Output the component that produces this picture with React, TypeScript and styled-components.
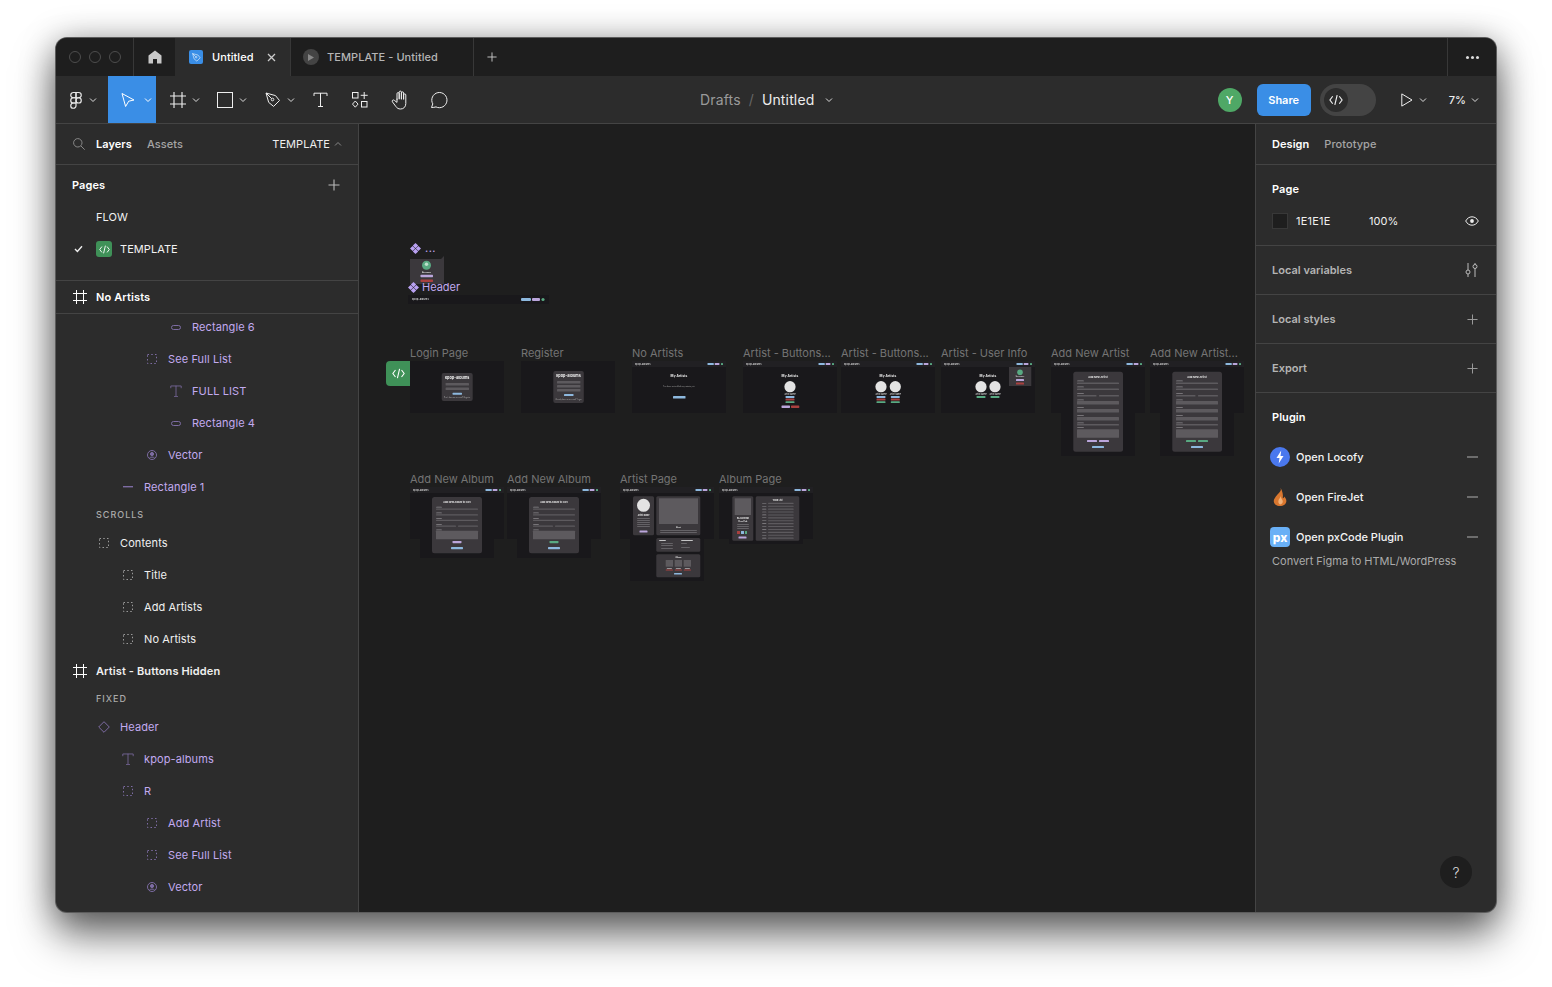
import React from 'react';
import styled, { createGlobalStyle } from 'styled-components';

const GlobalStyle = createGlobalStyle`
  html, body { margin: 0; padding: 0; background: #fff; }
  body { font-family: Inter, "Noto Sans", "Liberation Sans", sans-serif; -webkit-font-smoothing: antialiased; }
  * { box-sizing: border-box; }
`;

const PURPLE_TEXT = '#c2aaf0';
const PURPLE_ICON = '#7d6ca3';

/* ---------- icons ---------- */

type IconProps = { color?: string; size?: number };

const Chevron = ({ color = '#ddd' }: IconProps) => (
  <svg width="8" height="8" viewBox="0 0 8 8" fill="none"><path d="M1 2.5 4 5.5 7 2.5" stroke={color} strokeWidth="1" /></svg>
);
const Plus = ({ color = '#ddd', size = 11 }: IconProps) => (
  <svg width={size} height={size} viewBox="0 0 12 12" fill="none"><path d="M6 .5v11M.5 6h11" stroke={color} strokeWidth="1.1" /></svg>
);
const Minus = ({ color = '#999' }: IconProps) => (
  <svg width="11" height="12" viewBox="0 0 11 12" fill="none"><path d="M0 6h11" stroke={color} strokeWidth="1.2" /></svg>
);
const Hash = ({ color = '#fff', size = 14 }: IconProps) => (
  <svg width={size} height={size} viewBox="0 0 14 14" fill="none"><path d="M3.5 0v14M10.5 0v14M0 3.5h14M0 10.5h14" stroke={color} strokeWidth="1" /></svg>
);
const CodeGlyph = ({ color = '#fff', size = 12 }: IconProps) => (
  <svg width={size} height={size} viewBox="0 0 12 12" fill="none"><path d="M3.2 2.8 .8 6l2.4 3.2M8.8 2.8 11.2 6 8.8 9.2M7 1.8 5 10.2" stroke={color} strokeWidth="1" /></svg>
);
const FigmaLogo = () => (
  <svg width="16" height="18" viewBox="2 0 20 24" fill="none" stroke="#e8e8e8" strokeWidth="1.6">
    <path d="M5 5.5A3.5 3.5 0 0 1 8.5 2H12v7H8.5A3.5 3.5 0 0 1 5 5.5z" />
    <path d="M12 2h3.5a3.5 3.5 0 1 1 0 7H12V2z" />
    <path d="M12 12.5a3.5 3.5 0 1 1 7 0 3.5 3.5 0 1 1-7 0z" />
    <path d="M5 19.5A3.5 3.5 0 0 1 8.5 16H12v3.5a3.5 3.5 0 1 1-7 0z" />
    <path d="M5 12.5A3.5 3.5 0 0 1 8.5 9H12v7H8.5A3.5 3.5 0 0 1 5 12.5z" />
  </svg>
);
const CursorIcon = () => (
  <svg width="16" height="16" viewBox="0 0 16 16" fill="none"><path d="M2 1.5 14 8l-5.3 1.2L5.6 14.5 2 1.5Z" stroke="#fff" strokeWidth="1" strokeLinejoin="round" /></svg>
);
const RectIcon = () => (
  <svg width="16" height="16" viewBox="0 0 16 16" fill="none"><rect x=".5" y=".5" width="15" height="15" stroke="#eee" /></svg>
);
const PenIcon = ({ color = '#eee', size = 16 }: IconProps) => (
  <svg width={size} height={size} viewBox="0 0 16 16" fill="none" stroke={color}>
    <path d="M1 1l9.5 2.6 4 4.9-5.9 5.9-4.9-4Z" strokeLinejoin="round" />
    <path d="M1 1l5.6 5.6" />
    <circle cx="7.5" cy="7.5" r="1.3" />
  </svg>
);
const TextIcon = ({ color = '#eee', size = 15 }: IconProps) => (
  <svg width={size} height={size} viewBox="0 0 15 15" fill="none"><path d="M7.5 1v13M5 14.5h5M1 4V1.2h13V4" stroke={color} strokeWidth="1" /></svg>
);
const ResourcesIcon = () => (
  <svg width="16" height="16" viewBox="0 0 16 16" fill="none" stroke="#eee">
    <rect x=".5" y=".5" width="5.5" height="5.5" />
    <path d="M12.2 0v7M8.7 3.3h7" />
    <path d="M3.3 9 6 12.1 3.3 15.2.5 12.1Z" />
    <rect x="9.5" y="9.5" width="5.5" height="5.5" />
  </svg>
);
const HandIcon = () => (
  <svg width="19" height="20" viewBox="0 0 19 20" fill="none" stroke="#eee" strokeWidth="1" strokeLinejoin="round" strokeLinecap="round">
    <path d="M6 9.5V3.7a1.1 1.1 0 0 1 2.2 0V9M8.2 8.5V2.2a1.1 1.1 0 0 1 2.2 0V9M10.4 8.8V3a1.1 1.1 0 0 1 2.2 0v6M12.6 9V5a1.1 1.1 0 0 1 2.2 0v8.5c0 3.4-2.2 5.5-5.2 5.5-2.3 0-3.6-.9-4.8-2.6L1.4 11.8c-.8-1.2.8-2.5 1.9-1.5L6 12.4V9" />
  </svg>
);
const CommentIcon = () => (
  <svg width="18" height="18" viewBox="0 0 18 18" fill="none"><path d="M1.5 16.5l1.3-3.6A7.6 7.6 0 1 1 6 15.9c-1.4.5-2.9.6-4.5.6Z" stroke="#eee" strokeLinejoin="round" /></svg>
);
const PlayOutline = () => (
  <svg width="12" height="14" viewBox="0 0 12 14" fill="none"><path d="M.8.9 11 7 .8 13.1V.9Z" stroke="#eee" /></svg>
);
const HomeIcon = () => (
  <svg width="14" height="14" viewBox="0 0 14 14"><path d="M7 .5 13.5 5.6V13.5H9V9H5v4.5H.5V5.6Z" fill="#c8c8c8" /></svg>
);
const CloseIcon = () => (
  <svg width="9" height="9" viewBox="0 0 9 9" fill="none"><path d="M1 1l7 7M8 1 1 8" stroke="#ccc" strokeWidth="1.3" /></svg>
);
const SearchIcon = () => (
  <svg width="12" height="12" viewBox="0 0 12 12" fill="none" stroke="#888"><circle cx="4.8" cy="4.8" r="4.2" /><path d="M8 8l3.7 3.7" /></svg>
);
const CheckIcon = () => (
  <svg width="9" height="8" viewBox="0 0 9 8" fill="none"><path d="M1 4l2.4 2.4L8 1.2" stroke="#eee" strokeWidth="1.4" /></svg>
);
const EyeIcon = () => (
  <svg width="14" height="10" viewBox="0 0 14 10" fill="none"><path d="M.7 5C2.2 2.2 4.4.8 7 .8s4.8 1.4 6.3 4.2C11.8 7.8 9.6 9.2 7 9.2S2.2 7.8.7 5Z" stroke="#eee" /><circle cx="7" cy="5" r="1.9" fill="#eee" /></svg>
);
const SlidersIcon = () => (
  <svg width="13" height="14" viewBox="0 0 13 14" fill="none" stroke="#bbb"><path d="M3 0v7M3 11v3M10 0v1.500M10 5.500V14" /><circle cx="3" cy="9" r="2" /><circle cx="10" cy="3.500" r="2" /></svg>
);
const DottedFrame = ({ color = '#999' }: IconProps) => (
  <svg width="10" height="10" viewBox="0 0 10 10" fill="none"><rect x=".5" y=".5" width="9" height="9" stroke={color} strokeDasharray="1.5 2.25" /></svg>
);
const PillIcon = ({ color = PURPLE_ICON }: IconProps) => (
  <svg width="10" height="5" viewBox="0 0 10 5" fill="none"><rect x=".5" y=".5" width="9" height="4" rx="2" stroke={color} /></svg>
);
const DashIcon = ({ color = PURPLE_ICON }: IconProps) => (
  <svg width="10" height="2" viewBox="0 0 10 2"><rect width="10" height="1.4" fill={color} /></svg>
);
const VectorIcon = ({ color = PURPLE_ICON }: IconProps) => (
  <svg width="10" height="10" viewBox="0 0 10 10" fill="none" stroke={color}><circle cx="5" cy="5" r="4.5" /><circle cx="5" cy="4" r="1.6" fill={color} /><path d="M2.300 8.200C3 6.700 7 6.700 7.700 8.200" /></svg>
);
const DiamondIcon = ({ color = PURPLE_ICON }: IconProps) => (
  <svg width="12" height="12" viewBox="0 0 12 12" fill="none"><path d="M6 .7 11.300 6 6 11.300.7 6Z" stroke={color} /></svg>
);
const ComponentIcon = () => (
  <svg width="11" height="11" viewBox="0 0 11 11" fill="#b9a1f2"><path d="M5.500 0 8.200 2.600 5.500 5.200 2.800 2.600ZM5.500 5.800 8.200 8.400 5.500 11 2.800 8.400ZM2.600 2.900 5.200 5.500 2.600 8.100 0 5.500ZM8.400 2.900 11 5.500 8.400 8.100 5.800 5.500Z" /></svg>
);
const BoltBadge = () => (
  <svg width="20" height="20" viewBox="0 0 20 20"><circle cx="10" cy="10" r="10" fill="#4a78ee" /><path d="M11.200 3.500 6.500 11h3l-.8 5.500 4.800-7.600h-3Z" fill="#fff" /></svg>
);
const FlameBadge = () => (
  <svg width="20" height="20" viewBox="0 0 20 20">
    <g transform="translate(-2 0) scale(1.2 1)">
      <path d="M10.500 1c.8 2.500-.5 3.800-1.800 5.500C7.300 8.300 6.500 9.500 6.800 9c-.5 1.500-2 2.600-2 5 0 3 2.400 5 5.200 5s5.300-2 5.300-5c0-2-1-3.300-1.600-4.500-.3 1-.8 1.500-1.400 1.800.5-3.500-.3-7.500-1.800-10.300Z" fill="#d9772f" />
      <path d="M10.400 9c.3 1.700-1.800 3-1.800 5.400 0 1.700.9 2.800 1.700 3 1.300-.5 2.200-1.600 2-3.200-.1-1.400-1.500-2.900-1.900-5.200Z" fill="#f0b27a" />
    </g>
  </svg>
);

/* ---------- layout ---------- */

const Page = styled.div`
  width: 1552px;
  height: 987px;
  padding: 38px 56px 75px;
  overflow: hidden;
`;
const Window = styled.div`
  width: 1440px;
  height: 874px;
  display: flex;
  flex-direction: column;
  background: #2c2c2c;
  border-radius: 11px;
  overflow: hidden;
  color: #fff;
  font-size: 11px;
  font-weight: 500;
  letter-spacing: 0.06px;
  box-shadow: 0 0 0 1px #5c5c5c, 0 24px 42px rgba(0, 0, 0, 0.5), 0 4px 34px rgba(0, 0, 0, 0.4);
`;
const TabBar = styled.div`
  height: 38px;
  flex: none;
  display: flex;
  align-items: stretch;
  background: #1e1e1e;
`;
const Lights = styled.div`
  width: 78px;
  display: flex;
  align-items: center;
  gap: 8px;
  padding-left: 13px;
  border-right: 1px solid #383838;
`;
const Light = styled.span`
  width: 12px;
  height: 12px;
  border-radius: 50%;
  border: 1px solid #4d4d4d;
`;
const HomeTab = styled.div`
  width: 41px;
  display: flex;
  align-items: center;
  justify-content: center;
`;
const Tab = styled.div<{ $active?: boolean }>`
  width: ${p => (p.$active ? '116px' : '183px')};
  display: flex;
  align-items: center;
  padding-left: ${p => (p.$active ? '14px' : '12px')};
  background: ${p => (p.$active ? '#2c2c2c' : 'transparent')};
  color: ${p => (p.$active ? '#fff' : '#b5b5b5')};
  border-right: 1px solid #383838;
  font-size: 11px;
`;
const TabBlueIcon = styled.span`
  width: 14px;
  height: 14px;
  border-radius: 2px;
  background: #3a8ee6;
  display: flex;
  align-items: center;
  justify-content: center;
  margin-right: 9px;
`;
const TabPlayIcon = styled.span`
  width: 16px;
  height: 16px;
  border-radius: 50%;
  background: #444;
  display: flex;
  align-items: center;
  justify-content: center;
  margin-right: 8px;
`;
const TabClose = styled.span`
  margin-left: 13px;
  display: flex;
`;
const NewTab = styled.div`
  width: 36px;
  display: flex;
  align-items: center;
  justify-content: center;
`;
const TabSpacer = styled.div`
  flex: 1;
`;
const MoreTab = styled.div`
  width: 49px;
  border-left: 1px solid #383838;
  display: flex;
  align-items: center;
  justify-content: center;
  gap: 2px;
`;
const MoreDot = styled.span`
  width: 3px;
  height: 3px;
  border-radius: 50%;
  background: #ddd;
`;

const Toolbar = styled.div`
  height: 48px;
  flex: none;
  display: flex;
  align-items: stretch;
  background: #2c2c2c;
  border-bottom: 1px solid #444;
`;
const Tools = styled.div`
  width: 644px;
  display: flex;
  align-items: stretch;
`;
const Tool = styled.div<{ $w: number; $active?: boolean; $pad?: number; $center?: boolean; $gap?: number }>`
  width: ${p => p.$w}px;
  display: flex;
  align-items: center;
  gap: ${p => p.$gap ?? 6}px;
  justify-content: ${p => (p.$center ? 'center' : 'flex-start')};
  padding-left: ${p => (p.$center ? 0 : p.$pad ?? 14)}px;
  background: ${p => (p.$active ? '#3a8ee6' : 'transparent')};
`;
const Breadcrumb = styled.div`
  display: flex;
  align-items: center;
  font-size: 14px;
  font-weight: 400;
  letter-spacing: 0.15px;
`;
const Crumb = styled.span<{ $dim?: boolean }>`
  color: ${p => (p.$dim ? '#9a9a9a' : '#ececec')};
`;
const Slash = styled.span`
  color: #666;
  margin: 0 8px;
`;
const CrumbChevron = styled.span`
  display: flex;
  margin-left: 11px;
`;
const ToolbarRight = styled.div`
  margin-left: auto;
  display: flex;
  align-items: center;
  padding-right: 17px;
`;
const Avatar = styled.div`
  width: 24px;
  height: 24px;
  border-radius: 50%;
  background: #4fa866;
  display: flex;
  align-items: center;
  justify-content: center;
  font-size: 11px;
  margin-right: 15px;
`;
const ShareButton = styled.button`
  width: 54px;
  height: 32px;
  border: 0;
  border-radius: 6px;
  background: #3a8ee6;
  color: #fff;
  font: 600 11px Inter, sans-serif;
  margin-right: 9px;
`;
const CodeToggle = styled.div`
  width: 56px;
  height: 32px;
  border-radius: 16px;
  background: #444;
  padding: 4px;
  margin-right: 25px;
`;
const CodeKnob = styled.div`
  width: 24px;
  height: 24px;
  border-radius: 50%;
  background: #2c2c2c;
  display: flex;
  align-items: center;
  justify-content: center;
`;
const PlayGroup = styled.div`
  display: flex;
  align-items: center;
  gap: 6px;
  margin-right: 22px;
`;
const ZoomGroup = styled.div`
  display: flex;
  align-items: center;
  gap: 5px;
  font-size: 11px;
  color: #eee;
`;

const Body = styled.div`
  flex: 1;
  min-height: 0;
  display: flex;
`;
const LeftPanel = styled.aside`
  width: 303px;
  flex: none;
  border-right: 1px solid #444;
  display: flex;
  flex-direction: column;
  overflow: hidden;
`;
const PanelTabs = styled.div`
  height: 41px;
  flex: none;
  display: flex;
  align-items: center;
  border-bottom: 1px solid #444;
  padding: 0 16px;
`;
const SearchSlot = styled.span`
  display: flex;
  margin-right: 11px;
  margin-left: 1px;
`;
const PanelTab = styled.span<{ $active?: boolean }>`
  color: ${p => (p.$active ? '#fff' : '#a5a5a5')};
  font-weight: ${p => (p.$active ? 600 : 500)};
  margin-right: 15px;
`;
const PageSwitch = styled.span`
  margin-left: auto;
  display: flex;
  align-items: center;
  gap: 4px;
  color: #eee;
  font-weight: 400;
`;
const PagesSection = styled.section`
  height: 116px;
  flex: none;
  border-bottom: 1px solid #444;
`;
const PagesHead = styled.div`
  height: 36px;
  padding: 4px 18px 0 16px;
  display: flex;
  align-items: center;
  justify-content: space-between;
  font-weight: 600;
`;
const PageRow = styled.div`
  height: 32px;
  display: flex;
  align-items: center;
  padding-left: 40px;
  color: #f2f2f2;
  font-weight: 400;
  position: relative;
`;
const PageCheck = styled.span`
  position: absolute;
  left: 18px;
  display: flex;
`;
const GreenBadge = styled.span`
  width: 16px;
  height: 16px;
  border-radius: 3px;
  background: #3f9158;
  display: flex;
  align-items: center;
  justify-content: center;
  margin-right: 8px;
`;
const StickyRow = styled.div`
  height: 33px;
  flex: none;
  display: flex;
  align-items: center;
  gap: 9px;
  padding-left: 17px;
  font-weight: 600;
  letter-spacing: 0.12px;
  border-bottom: 1px solid #444;
`;
const LayerList = styled.div`
  margin-top: -3px;
`;
const LayerRow = styled.div<{ $depth: number; $purple?: boolean; $bold?: boolean }>`
  height: 32px;
  display: flex;
  align-items: center;
  padding-left: ${p => 16 + p.$depth * 24}px;
  color: ${p => (p.$purple ? PURPLE_TEXT : '#f0f0f0')};
  font-weight: ${p => (p.$bold ? 600 : 400)};
  letter-spacing: ${p => (p.$bold ? 0.12 : 0.1)}px;
`;
const LayerIcon = styled.span`
  width: 16px;
  height: 16px;
  display: flex;
  align-items: center;
  justify-content: center;
  margin-right: 8px;
`;
const SectionLabel = styled.div`
  height: 24px;
  display: flex;
  align-items: center;
  padding: 0 0 2px 40px;
  font-size: 9px;
  font-weight: 500;
  letter-spacing: 1px;
  color: #aaa;
`;

const Canvas = styled.main`
  flex: 1;
  position: relative;
  background: #1e1e1e;
  overflow: hidden;
`;
const Thumb = styled.div<{ $x: number; $y: number; $w: number }>`
  position: absolute;
  left: ${p => p.$x - 359}px;
  top: ${p => p.$y - 124 - 16}px;
  width: ${p => p.$w}px;
  display: flex;
  flex-direction: column;
`;
const ThumbLabel = styled.div`
  height: 16px;
  line-height: 16px;
  font-size: 11px;
  font-weight: 400;
  letter-spacing: 0;
  color: #747474;
  white-space: nowrap;
`;
const ThumbArt = styled.svg`
  display: block;
  overflow: visible;
  filter: blur(0.35px);
`;
const CodeTag = styled.div`
  position: absolute;
  left: 27px;
  top: 237px;
  width: 24px;
  height: 25px;
  border-radius: 4px 0 0 4px;
  background: #3f9158;
  display: flex;
  align-items: center;
  justify-content: center;
`;
const ComponentLabel = styled.div<{ $x: number; $y: number; $big?: boolean }>`
  position: absolute;
  left: ${p => p.$x - 359}px;
  top: ${p => p.$y - 124}px;
  display: flex;
  align-items: center;
  gap: ${p => (p.$big ? 3 : 4)}px;
  color: ${PURPLE_TEXT};
  font-weight: 400;
  font-size: 11px;
  line-height: 12px;
  letter-spacing: ${p => (p.$big ? 0 : 0.5)}px;
`;
const FreeArt = styled.svg<{ $x: number; $y: number }>`
  position: absolute;
  left: ${p => p.$x - 359}px;
  top: ${p => p.$y - 124}px;
  filter: blur(0.35px);
`;

const RightPanel = styled.aside`
  width: 241px;
  flex: none;
  border-left: 1px solid #444;
  position: relative;
  display: flex;
  flex-direction: column;
`;
const RightSection = styled.section<{ $h: number }>`
  height: ${p => p.$h}px;
  flex: none;
  border-bottom: 1px solid #444;
  padding: 0 16px;
  display: flex;
  flex-direction: column;
`;
const CollapsedHead = styled.div`
  flex: 1;
  display: flex;
  align-items: center;
  justify-content: space-between;
  font-weight: 600;
  letter-spacing: 0;
  color: #b4b4b4;
  padding-right: 2px;
`;
const SectionTitle = styled.div`
  height: 48px;
  display: flex;
  align-items: center;
  font-weight: 600;
  flex: none;
`;
const PluginTitle = styled(SectionTitle)`
  height: 44px;
  padding-top: 4px;
`;
const FillRow = styled.div`
  height: 16px;
  display: flex;
  align-items: center;
  color: #f0f0f0;
  font-weight: 400;
`;
const Swatch = styled.span`
  width: 16px;
  height: 16px;
  background: #1e1e1e;
  border: 1px solid #383838;
  margin-right: 8px;
`;
const FillHex = styled.span`
  width: 73px;
  letter-spacing: 0.2px;
`;
const FillEye = styled.span`
  margin-left: auto;
  margin-right: 1px;
  display: flex;
`;
const PluginList = styled.section`
  padding: 0 16px;
  display: flex;
  flex-direction: column;
`;
const PluginRow = styled.div`
  height: 40px;
  display: flex;
  align-items: center;
  color: #f4f4f4;
  letter-spacing: 0;
`;
const PluginIcon = styled.span`
  width: 20px;
  height: 20px;
  margin-left: -2px;
  margin-right: 6px;
  display: flex;
`;
const PxBadge = styled.span`
  width: 20px;
  height: 20px;
  border-radius: 4px;
  background: #69b0f6;
  color: #fff;
  font: 800 12px Inter, sans-serif;
  display: flex;
  align-items: center;
  justify-content: center;
`;
const PluginMinus = styled.span`
  margin-left: auto;
  margin-right: 2px;
  display: flex;
`;
const PluginNote = styled.div`
  color: #ababab;
  font-weight: 400;
  letter-spacing: 0;
  line-height: 14px;
  margin-top: -3px;
`;
const HelpButton = styled.div`
  position: absolute;
  right: 24px;
  bottom: 24px;
  width: 32px;
  height: 32px;
  border-radius: 50%;
  background: #1e1e1e;
  color: #ddd;
  font-size: 14px;
  font-weight: 300;
  display: flex;
  align-items: center;
  justify-content: center;
`;

/* ---------- miniature frames on the canvas ---------- */

const C = {
  frame: '#19181b',
  bar: '#212023',
  card: '#3b383c',
  field: '#5d5a5e',
  blue: '#8db8de',
  purple: '#bba6dc',
  red: '#a9403f',
  green: '#59a982',
  disc: '#e3e3e3',
  text: '#f2f2f2',
};

const Tiny = ({ x, y, s = 2.4, w = 400, c = C.text, a = 'start', children }: { x: number; y: number; s?: number; w?: number; c?: string; a?: 'start' | 'middle' | 'end'; children: string }) => (
  <text x={x} y={y} fontSize={s} fontWeight={w} fill={c} textAnchor={a} fontFamily="Inter, sans-serif">{children}</text>
);
const Bar = ({ x, y, w, h = 2, c, r = 0.6 }: { x: number; y: number; w: number; h?: number; c: string; r?: number }) => (
  <rect x={x} y={y} width={w} height={h} rx={r} fill={c} />
);
const MiniHeader = ({ w = 94 }: { w?: number }) => (
  <>
    <rect width={w} height="6" fill={C.bar} />
    <Tiny x={3} y={3.9}>kpop-albums</Tiny>
    <Bar x={w - 18.5} y={2} w={6.300} c={C.blue} />
    <Bar x={w - 11.300} y={2} w={4.700} c={C.purple} />
    <Bar x={w - 5} y={2} w={2} c={C.green} />
  </>
);
const Backdrop = ({ h = 52, lower }: { h?: number; lower?: number }) => (
  <>
    <rect width="94" height={h} fill={C.frame} />
    {lower ? <rect x="10" y={h} width="74" height={lower} fill={C.frame} /> : null}
  </>
);
const ArtistColumn = ({ cx, bars }: { cx: number; bars: string[] }) => (
  <>
    <circle cx={cx} cy="25.700" r="5.600" fill={C.disc} />
    <Tiny x={cx} y={34} a="middle" s={1.900}>Artist Name</Tiny>
    {bars.map((c, i) => <Bar key={i} x={cx - 4.500} y={35 + i * 2.600} w={9} h={1.900} c={c} />)}
  </>
);

const LoginArt = () => (
  <ThumbArt width="94" height="52">
    <Backdrop />
    <rect x="31.700" y="12" width="31" height="28" rx="2" fill={C.card} />
    <Tiny x={47.200} y={18} a="middle" s={3.700} w={700}>kpop-albums</Tiny>
    <Bar x={35.600} y={22} w={23.400} h={2.500} c={C.field} />
    <Bar x={35.600} y={26.500} w={23.400} h={2.500} c={C.field} />
    <Bar x={42.500} y={31.700} w={9.500} h={2} c={C.blue} />
    <Tiny x={47.200} y={37} a="middle" s={1.600} c="#bbb">Don't have an account? Register</Tiny>
  </ThumbArt>
);
const RegisterArt = () => (
  <ThumbArt width="95" height="52">
    <Backdrop />
    <rect x="32.300" y="10" width="30.500" height="32" rx="2" fill={C.card} />
    <Tiny x={47.500} y={16} a="middle" s={3.700} w={700}>kpop-albums</Tiny>
    <Bar x={36} y={20} w={23.400} h={2.500} c={C.field} />
    <Bar x={36} y={24} w={23.400} h={2.500} c={C.field} />
    <Bar x={36} y={28} w={23.400} h={2.500} c={C.field} />
    <Bar x={43} y={33} w={9.500} h={2} c={C.blue} />
    <Tiny x={47.500} y={39} a="middle" s={1.600} c="#bbb">Already have an account? Login</Tiny>
  </ThumbArt>
);
const NoArtistsArt = () => (
  <ThumbArt width="95" height="52">
    <Backdrop />
    <MiniHeader />
    <Tiny x={47} y={15.500} a="middle" s={3.200} w={700}>My Artists</Tiny>
    <Tiny x={47} y={25.500} a="middle" s={1.800} c="#aaa">You have not added any artists yet.</Tiny>
    <Bar x={41} y={35} w={12.500} h={2.600} c={C.blue} />
  </ThumbArt>
);
const ButtonsOneArt = () => (
  <ThumbArt width="94" height="52">
    <Backdrop />
    <MiniHeader />
    <Tiny x={47} y={15.500} a="middle" s={3.200} w={700}>My Artists</Tiny>
    <ArtistColumn cx={47} bars={[C.blue, C.red, C.green]} />
    <Bar x={38.500} y={44.500} w={8.500} h={2.400} c={C.purple} />
    <Bar x={48} y={44.500} w={8.300} h={2.400} c={C.red} />
  </ThumbArt>
);
const ButtonsTwoArt = () => (
  <ThumbArt width="94" height="52">
    <Backdrop />
    <MiniHeader />
    <Tiny x={47} y={15.500} a="middle" s={3.200} w={700}>My Artists</Tiny>
    <ArtistColumn cx={40} bars={[C.blue, C.red, C.green]} />
    <ArtistColumn cx={54.300} bars={[C.blue, C.red, C.green]} />
  </ThumbArt>
);
const UserInfoArt = () => (
  <ThumbArt width="94" height="52">
    <Backdrop />
    <MiniHeader />
    <Tiny x={47} y={15.500} a="middle" s={3.200} w={700}>My Artists</Tiny>
    <ArtistColumn cx={40} bars={[C.green]} />
    <ArtistColumn cx={54} bars={[C.green]} />
    <rect x="68" y="6" width="22.300" height="19" fill={C.card} />
    <circle cx="79" cy="11.300" r="2.800" fill={C.green} />
    <Tiny x={79} y={15.800} a="middle" s={1.700}>Username</Tiny>
    <Bar x={75} y={18} w={8} c={C.purple} />
    <Bar x={75} y={21.500} w={8} c={C.red} />
  </ThumbArt>
);
const NewArtistArt = ({ accent }: { accent: string }) => (
  <ThumbArt width="94" height="95">
    <Backdrop lower={43} />
    <MiniHeader />
    <rect x="22.300" y="10.700" width="49.700" height="80" rx="2.500" fill={C.card} />
    <Tiny x={47} y={16.500} a="middle" s={2.500} w={700}>Add New Artist</Tiny>
    {[19.500, 25.500, 32, 38.500, 46, 54, 61.500, 66.300].map((y, i) => <Bar key={i} x={26} y={y} w={7} h={0.800} c="#8a878b" />)}
    <Bar x={26} y={21.500} w={42} h={1.500} c={C.field} />
    <Bar x={26} y={27.500} w={42} h={1.500} c={C.field} />
    <Bar x={26} y={34} w={19.500} h={1.500} c={C.field} />
    <Bar x={48} y={34} w={20} h={1.500} c={C.field} />
    <Bar x={26} y={40} w={42} h={3.500} c={C.field} />
    <Bar x={26} y={48} w={42} h={3.500} c={C.field} />
    <Bar x={26} y={56} w={42} h={3.500} c={C.field} />
    <Bar x={26} y={63} w={42} h={1.500} c={C.field} />
    <Bar x={26} y={68.300} w={42} h={8.500} c={C.field} />
    <Bar x={36} y={79} w={10} h={2} c={accent} />
    <Bar x={48} y={79} w={10} h={2} c={accent} />
    <Bar x={41} y={85} w={12} h={2} c={C.blue} />
  </ThumbArt>
);
const NewAlbumArt = ({ accent }: { accent: string }) => (
  <ThumbArt width="94" height="71">
    <Backdrop lower={19} />
    <MiniHeader />
    <rect x="22" y="10" width="50" height="56.300" rx="2.500" fill={C.card} />
    <Tiny x={47} y={16} a="middle" s={2.300} w={700}>Add New Album to ICE1</Tiny>
    {[19.800, 25.500, 31, 37.300, 42.500].map((y, i) => <Bar key={i} x={26} y={y} w={6} h={0.800} c="#8a878b" />)}
    <Bar x={26} y={21.500} w={42} h={1.300} c={C.field} />
    <Bar x={26} y={27.200} w={42} h={1.300} c={C.field} />
    <Bar x={26} y={32.800} w={42} h={1.300} c={C.field} />
    <Bar x={26} y={38.500} w={20} h={1.300} c={C.field} />
    <Bar x={48} y={38.500} w={20} h={1.300} c={C.field} />
    <Bar x={26} y={43.700} w={42} h={8.600} c={C.field} />
    <Bar x={42.500} y={54} w={9} h={2.200} c={accent} />
    <Bar x={41} y={60} w={12} h={2.200} c={C.blue} />
  </ThumbArt>
);
const ArtistPageArt = () => (
  <ThumbArt width="94" height="94">
    <Backdrop lower={42} />
    <MiniHeader />
    <rect x="13" y="9.300" width="21" height="39" rx="1.500" fill={C.card} />
    <circle cx="23.500" cy="18.300" r="6.500" fill={C.disc} />
    <Tiny x={23.500} y={28.500} a="middle" s={1.900} w={700}>Artist Name</Tiny>
    {[31, 33, 35, 37, 39].map(y => <Bar key={y} x={17} y={y} w={13} h={0.500} c="#8e8b8f" />)}
    <Bar x={19.500} y={43.500} w={8} h={2} c={C.purple} />
    <rect x="36.300" y="9.300" width="44" height="39" rx="1.500" fill={C.card} />
    <rect x="39" y="11.300" width="39" height="25.700" fill={C.field} />
    <Tiny x={58.500} y={41} a="middle" s={1.500} w={700}>About</Tiny>
    <Bar x={40} y={43} w={37} h={0.500} c="#8e8b8f" />
    <Bar x={40} y={45} w={37} h={0.500} c="#8e8b8f" />
    <rect x="36.300" y="51" width="44" height="13.700" rx="1.500" fill={C.card} />
    <Bar x={39} y={53} w={7} h={0.800} c={C.text} />
    <Bar x={61} y={53} w={12} h={0.800} c={C.text} />
    {[56, 58.500, 61].map(y => <Bar key={y} x={41} y={y} w={12} h={0.500} c="#8e8b8f" />)}
    <Bar x={61} y={56} w={6} h={0.500} c="#8e8b8f" />
    <Bar x={61} y={60} w={9} h={0.500} c="#8e8b8f" />
    <rect x="36.300" y="67.300" width="44" height="23" rx="1.500" fill={C.card} />
    <Tiny x={58.500} y={71} a="middle" s={1.500} w={700}>Albums</Tiny>
    {[45.700, 54.700, 63.700].map(x => (
      <g key={x}>
        <rect x={x} y="73" width="7.300" height="6.700" fill={C.field} />
        <Bar x={x + 1} y={81} w={5.300} h={0.600} c={C.text} />
        <Bar x={x} y={82.600} w={7.300} h={1} c={C.red} />
      </g>
    ))}
    <Bar x={54} y={86} w={8} h={1.600} c={C.blue} />
  </ThumbArt>
);
const AlbumPageArt = () => (
  <ThumbArt width="94" height="57">
    <Backdrop lower={5} />
    <MiniHeader />
    <rect x="13.300" y="9.300" width="21" height="44.400" rx="1.500" fill={C.card} />
    <rect x="15.700" y="11.300" width="16.300" height="16.700" fill={C.field} />
    <Tiny x={24} y={31.500} a="middle" s={2} w={700}>BLACKPINK</Tiny>
    <Tiny x={24} y={34.800} a="middle" s={1.800} w={700}>Born Pink</Tiny>
    {[37, 39, 41].map(y => <Bar key={y} x={18} y={y} w={12} h={0.500} c="#8e8b8f" />)}
    <Bar x={18} y={44} w={3} h={3} r={0.300} c={C.red} />
    <Bar x={22} y={44} w={3} h={3} r={0.300} c={C.blue} />
    <Bar x={26} y={44} w={2} h={3} r={0.300} c={C.green} />
    <Bar x={19.500} y={49.500} w={8} h={2} c={C.purple} />
    <rect x="36.700" y="9.300" width="43.600" height="44.400" rx="1.500" fill={C.card} />
    <Tiny x={58.500} y={13.800} a="middle" s={2} w={700}>Track List</Tiny>
    {Array.from({ length: 13 }, (_, i) => (
      <g key={i}>
        <Bar x={43} y={16 + i * 2.900} w={4.500} h={0.600} c="#8e8b8f" />
        <Bar x={49} y={15.800 + i * 2.900} w={25.700} h={1.100} c={C.field} />
      </g>
    ))}
  </ThumbArt>
);

const thumbs = [
  { x: 410, y: 361, w: 94, label: 'Login Page', art: <LoginArt /> },
  { x: 521, y: 361, w: 95, label: 'Register', art: <RegisterArt /> },
  { x: 632, y: 361, w: 95, label: 'No Artists', art: <NoArtistsArt /> },
  { x: 743, y: 361, w: 94, label: 'Artist - Buttons...', art: <ButtonsOneArt /> },
  { x: 841, y: 361, w: 94, label: 'Artist - Buttons...', art: <ButtonsTwoArt /> },
  { x: 941, y: 361, w: 94, label: 'Artist - User Info', art: <UserInfoArt /> },
  { x: 1051, y: 361, w: 94, label: 'Add New Artist', art: <NewArtistArt accent={C.purple} /> },
  { x: 1150, y: 361, w: 94, label: 'Add New Artist...', art: <NewArtistArt accent={C.green} /> },
  { x: 410, y: 487, w: 94, label: 'Add New Album', art: <NewAlbumArt accent={C.purple} /> },
  { x: 507, y: 487, w: 94, label: 'Add New Album', art: <NewAlbumArt accent={C.green} /> },
  { x: 620, y: 487, w: 94, label: 'Artist Page', art: <ArtistPageArt /> },
  { x: 719, y: 487, w: 94, label: 'Album Page', art: <AlbumPageArt /> },
];

/* ---------- layer tree ---------- */

type Kind = 'hash' | 'pill' | 'dots' | 'text' | 'vector' | 'dash' | 'diamond' | 'label';
type Layer = { name: string; kind: Kind; depth?: number; purple?: boolean };

const layers: Layer[] = [
  { name: 'Rectangle 6', kind: 'pill', depth: 4, purple: true },
  { name: 'See Full List', kind: 'dots', depth: 3, purple: true },
  { name: 'FULL LIST', kind: 'text', depth: 4, purple: true },
  { name: 'Rectangle 4', kind: 'pill', depth: 4, purple: true },
  { name: 'Vector', kind: 'vector', depth: 3, purple: true },
  { name: 'Rectangle 1', kind: 'dash', depth: 2, purple: true },
  { name: 'SCROLLS', kind: 'label' },
  { name: 'Contents', kind: 'dots', depth: 1 },
  { name: 'Title', kind: 'dots', depth: 2 },
  { name: 'Add Artists', kind: 'dots', depth: 2 },
  { name: 'No Artists', kind: 'dots', depth: 2 },
  { name: 'Artist - Buttons Hidden', kind: 'hash', depth: 0 },
  { name: 'FIXED', kind: 'label' },
  { name: 'Header', kind: 'diamond', depth: 1, purple: true },
  { name: 'kpop-albums', kind: 'text', depth: 2, purple: true },
  { name: 'R', kind: 'dots', depth: 2, purple: true },
  { name: 'Add Artist', kind: 'dots', depth: 3, purple: true },
  { name: 'See Full List', kind: 'dots', depth: 3, purple: true },
  { name: 'Vector', kind: 'vector', depth: 3, purple: true },
];

const layerIcon = (kind: Kind, purple?: boolean) => {
  const tint = purple ? PURPLE_ICON : '#9a9a9a';
  switch (kind) {
    case 'hash': return <Hash />;
    case 'pill': return <PillIcon color={tint} />;
    case 'dots': return <DottedFrame color={tint} />;
    case 'text': return <TextIcon color={tint} size={12} />;
    case 'vector': return <VectorIcon color={tint} />;
    case 'dash': return <DashIcon color={tint} />;
    default: return <DiamondIcon color={tint} />;
  }
};

/* ---------- app ---------- */

export default function App() {
  return (
    <>
      <GlobalStyle />
      <Page>
        <Window>
          <TabBar>
            <Lights><Light /><Light /><Light /></Lights>
            <HomeTab><HomeIcon /></HomeTab>
            <Tab $active>
              <TabBlueIcon><PenIcon color="#fff" size={9} /></TabBlueIcon>
              Untitled
              <TabClose><CloseIcon /></TabClose>
            </Tab>
            <Tab>
              <TabPlayIcon>
                <svg width="6" height="7" viewBox="0 0 6 7"><path d="M0 0l6 3.500L0 7Z" fill="#888" /></svg>
              </TabPlayIcon>
              TEMPLATE - Untitled
            </Tab>
            <NewTab><Plus color="#ccc" size={10} /></NewTab>
            <TabSpacer />
            <MoreTab><MoreDot /><MoreDot /><MoreDot /></MoreTab>
          </TabBar>

          <Toolbar>
            <Tools>
              <Tool $w={52} $pad={12} $gap={5}><FigmaLogo /><Chevron /></Tool>
              <Tool $w={48} $active $pad={12} $gap={8}><CursorIcon /><Chevron color="#fff" /></Tool>
              <Tool $w={48}><Hash color="#eee" size={16} /><Chevron /></Tool>
              <Tool $w={48} $pad={13}><RectIcon /><Chevron /></Tool>
              <Tool $w={48} $pad={13}><PenIcon /><Chevron /></Tool>
              <Tool $w={40} $center><TextIcon /></Tool>
              <Tool $w={40} $center><ResourcesIcon /></Tool>
              <Tool $w={40} $center><HandIcon /></Tool>
              <Tool $w={38} $center><CommentIcon /></Tool>
            </Tools>
            <Breadcrumb>
              <Crumb $dim>Drafts</Crumb>
              <Slash>/</Slash>
              <Crumb>Untitled</Crumb>
              <CrumbChevron><Chevron /></CrumbChevron>
            </Breadcrumb>
            <ToolbarRight>
              <Avatar>Y</Avatar>
              <ShareButton>Share</ShareButton>
              <CodeToggle><CodeKnob><CodeGlyph size={14} color="#eee" /></CodeKnob></CodeToggle>
              <PlayGroup><PlayOutline /><Chevron /></PlayGroup>
              <ZoomGroup>7%<Chevron /></ZoomGroup>
            </ToolbarRight>
          </Toolbar>

          <Body>
            <LeftPanel>
              <PanelTabs>
                <SearchSlot><SearchIcon /></SearchSlot>
                <PanelTab $active>Layers</PanelTab>
                <PanelTab>Assets</PanelTab>
                <PageSwitch>
                  TEMPLATE
                  <svg width="8" height="8" viewBox="0 0 8 8" fill="none"><path d="M1 5.500 4 2.500 7 5.500" stroke="#888" /></svg>
                </PageSwitch>
              </PanelTabs>
              <PagesSection>
                <PagesHead>Pages<Plus color="#bbb" size={12} /></PagesHead>
                <PageRow>FLOW</PageRow>
                <PageRow>
                  <PageCheck><CheckIcon /></PageCheck>
                  <GreenBadge><CodeGlyph size={11} /></GreenBadge>
                  TEMPLATE
                </PageRow>
              </PagesSection>
              <StickyRow><Hash />No Artists</StickyRow>
              <LayerList>
                {layers.map((l, i) =>
                  l.kind === 'label' ? (
                    <SectionLabel key={i}>{l.name}</SectionLabel>
                  ) : (
                    <LayerRow key={i} $depth={l.depth ?? 0} $purple={l.purple} $bold={l.kind === 'hash'}>
                      <LayerIcon>{layerIcon(l.kind, l.purple)}</LayerIcon>
                      {l.name}
                    </LayerRow>
                  )
                )}
              </LayerList>
            </LeftPanel>

            <Canvas>
              <ComponentLabel $x={410} $y={242}><ComponentIcon />...</ComponentLabel>
              <FreeArt $x={410} $y={256} width="34" height="30">
                <path d="M0 3h31l3-3v28H0Z" fill={C.card} />
                <circle cx="16.500" cy="9.300" r="4.500" fill={C.green} />
                <circle cx="16.500" cy="8.300" r="1.700" fill="#bfe0cc" />
                <Tiny x={16.500} y={17} a="middle" s={1.700} w={700}>Username</Tiny>
                <Bar x={10.500} y={18.800} w={12.500} h={2.400} c={C.purple} />
                <Bar x={10.500} y={23.500} w={12.500} h={2.400} c={C.red} />
              </FreeArt>
              <ComponentLabel $x={408} $y={281} $big><ComponentIcon />Header</ComponentLabel>
              <FreeArt $x={408} $y={295} width="141" height="9">
                <rect width="141" height="9" fill={C.frame} />
                <Tiny x={4} y={5.300} s={2.600}>kpop-albums</Tiny>
                <Bar x={113} y={3} w={10} h={3} r={1} c={C.blue} />
                <Bar x={124} y={3} w={8} h={3} r={1} c={C.purple} />
                <circle cx="135" cy="4.500" r="1.600" fill={C.green} />
              </FreeArt>
              <CodeTag><CodeGlyph size={13} /></CodeTag>
              {thumbs.map((t, i) => (
                <Thumb key={i} $x={t.x} $y={t.y} $w={t.w}>
                  <ThumbLabel>{t.label}</ThumbLabel>
                  {t.art}
                </Thumb>
              ))}
            </Canvas>

            <RightPanel>
              <PanelTabs>
                <PanelTab $active>Design</PanelTab>
                <PanelTab>Prototype</PanelTab>
              </PanelTabs>
              <RightSection $h={81}>
                <SectionTitle>Page</SectionTitle>
                <FillRow>
                  <Swatch />
                  <FillHex>1E1E1E</FillHex>
                  100%
                  <FillEye><EyeIcon /></FillEye>
                </FillRow>
              </RightSection>
              <RightSection $h={49}><CollapsedHead>Local variables<SlidersIcon /></CollapsedHead></RightSection>
              <RightSection $h={49}><CollapsedHead>Local styles<Plus color="#999" /></CollapsedHead></RightSection>
              <RightSection $h={49}><CollapsedHead>Export<Plus color="#999" /></CollapsedHead></RightSection>
              <PluginList>
                <PluginTitle>Plugin</PluginTitle>
                <PluginRow><PluginIcon><BoltBadge /></PluginIcon>Open Locofy<PluginMinus><Minus /></PluginMinus></PluginRow>
                <PluginRow><PluginIcon><FlameBadge /></PluginIcon>Open FireJet<PluginMinus><Minus /></PluginMinus></PluginRow>
                <PluginRow><PluginIcon><PxBadge>px</PxBadge></PluginIcon>Open pxCode Plugin<PluginMinus><Minus /></PluginMinus></PluginRow>
                <PluginNote>Convert Figma to HTML/WordPress</PluginNote>
              </PluginList>
              <HelpButton>?</HelpButton>
            </RightPanel>
          </Body>
        </Window>
      </Page>
    </>
  );
}
